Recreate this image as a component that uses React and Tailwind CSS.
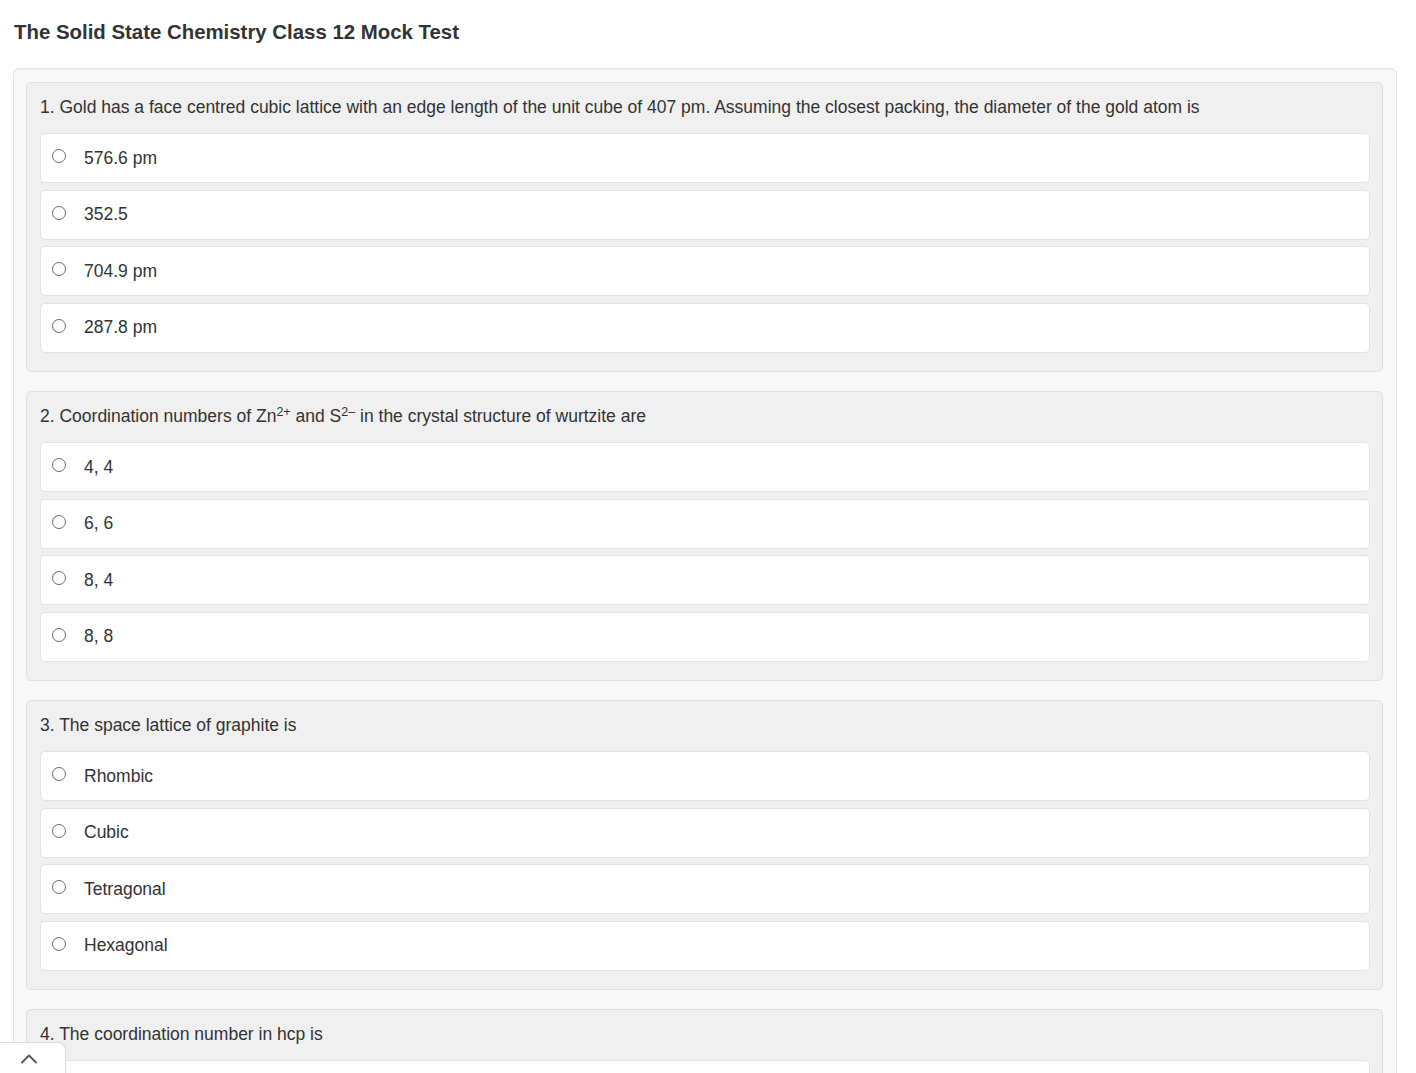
import { ChevronUp } from 'lucide-react';

const questions = [
  {
    id: 1,
    text: '1. Gold has a face centred cubic lattice with an edge length of the unit cube of 407 pm. Assuming the closest packing, the diameter of the gold atom is',
    options: ['576.6 pm', '352.5', '704.9 pm', '287.8 pm'],
  },
  {
    id: 2,
    text: (
      <>
        2. Coordination numbers of Zn<sup className="text-[12.5px]">2+</sup> and S<sup className="text-[12.5px]">2–</sup> in the crystal structure of wurtzite are
      </>
    ),
    options: ['4, 4', '6, 6', '8, 4', '8, 8'],
  },
  {
    id: 3,
    text: '3. The space lattice of graphite is',
    options: ['Rhombic', 'Cubic', 'Tetragonal', 'Hexagonal'],
  },
  {
    id: 4,
    text: '4. The coordination number in hcp is',
    options: ['6', '12', '18', '24'],
  },
];

function Question({ q }) {
  return (
    <div className="bg-[#f0f0f0] border border-[#e0e0e0] rounded-[5px] pt-[12px] pb-[18.5px] pl-[13px] pr-[12px]">
      <p className="text-[17.5px] leading-[24px] text-[#333] mb-[14px]">{q.text}</p>
      <div className="flex flex-col gap-[6.5px]">
        {q.options.map((opt) => (
          <label
            key={opt}
            className="flex items-center h-[50px] bg-white border border-[#e3e3e3] rounded-[5px] pl-[11px]"
          >
            <input
              type="radio"
              name={`q${q.id}`}
              className="appearance-none w-[14px] h-[14px] m-0 -mt-[4px] rounded-full border border-[#6b6b6b] bg-white shrink-0"
            />
            <span className="ml-[18px] text-[17.5px] text-[#333]">{opt}</span>
          </label>
        ))}
      </div>
    </div>
  );
}

export default function App() {
  return (
    <div className="min-h-screen bg-white font-['Liberation_Sans',Arial,sans-serif] pb-10">
      <h1 className="px-[14px] pt-[19px] pb-[23px] text-[20.4px] leading-[26px] font-bold text-[#333]">
        The Solid State Chemistry Class 12 Mock Test
      </h1>
      <div className="mx-[13px] w-[1384px] bg-[#f8f8f8] border border-[#e3e3e3] rounded-[6px] pl-[12px] pr-[13px] pt-[13px] pb-[20px] flex flex-col gap-[19px] shadow-[inset_0_1px_1px_rgba(0,0,0,0.03)]">
        {questions.map((q) => (
          <Question key={q.id} q={q} />
        ))}
      </div>

      {/* back to top */}
      <button className="fixed left-0 bottom-0 w-[66px] h-[31px] bg-white border border-[#ddd] border-l-0 border-b-0 rounded-tr-[8px] flex items-center pl-[15px]">
        <ChevronUp className="w-[28px] h-[28px] mt-[2px] text-[#555]" strokeWidth={1.6} />
      </button>
    </div>
  );
}
